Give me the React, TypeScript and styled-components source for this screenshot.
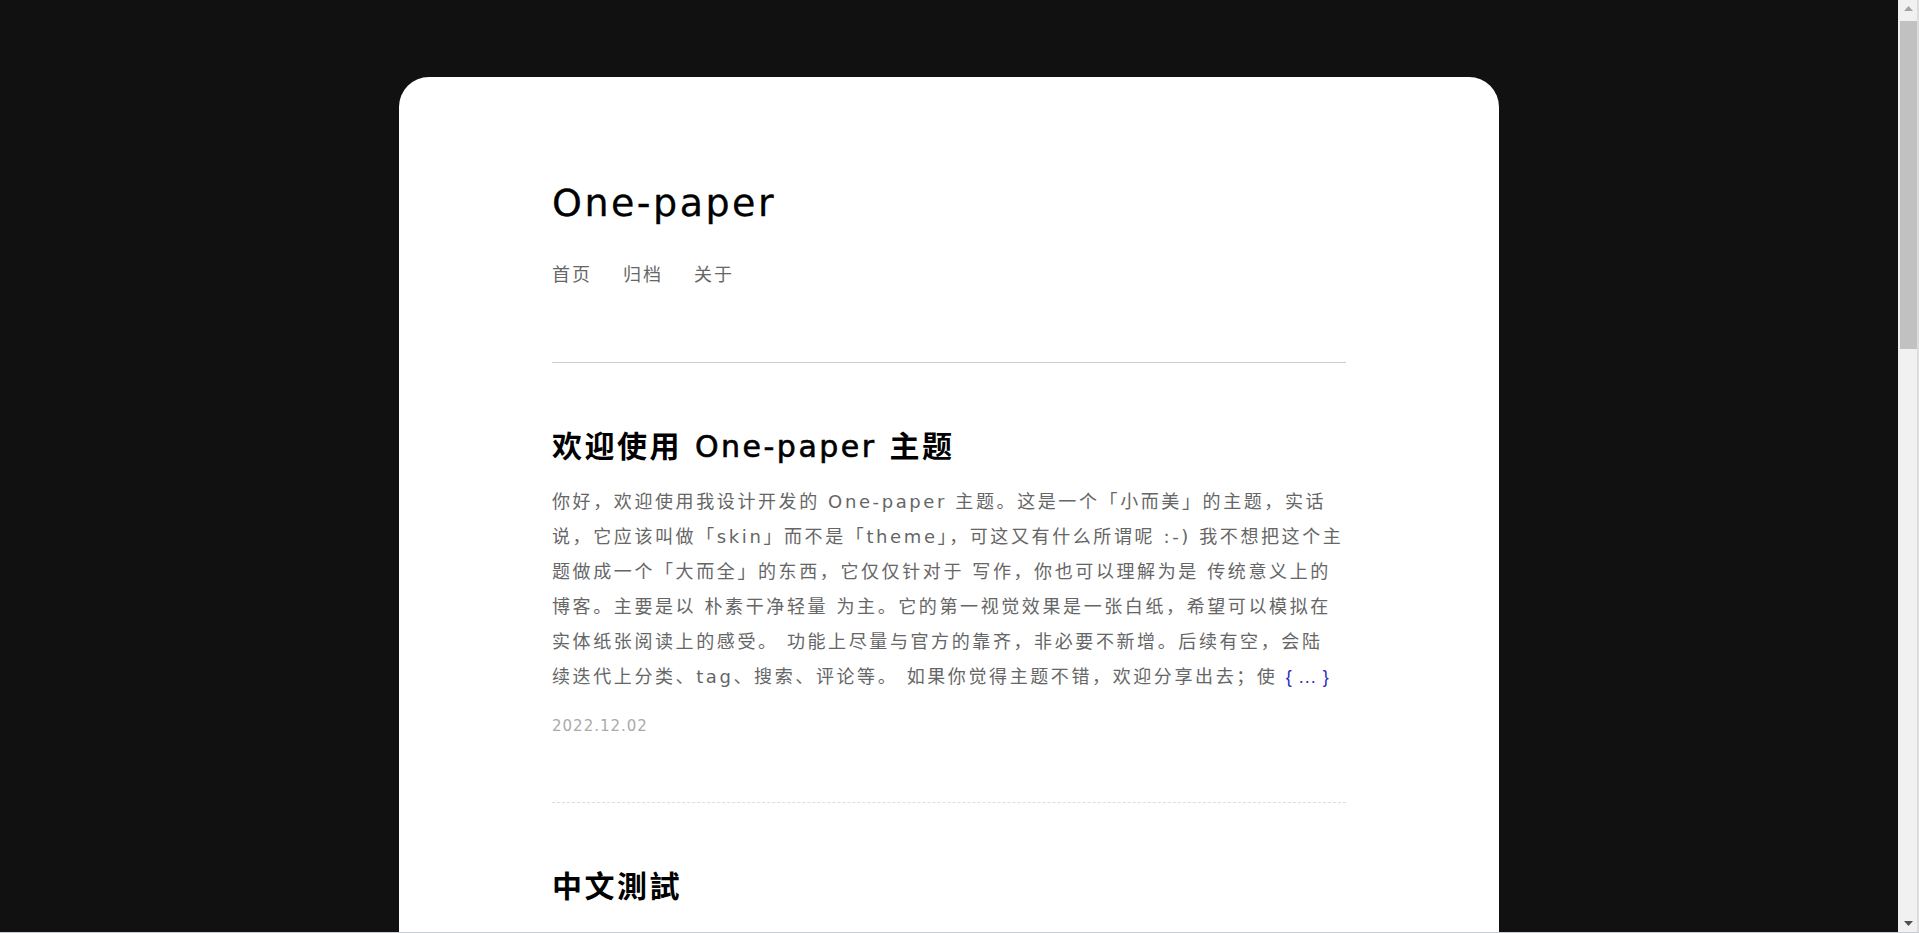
import React from "react";
import styled, { createGlobalStyle } from "styled-components";

const GlobalStyle = createGlobalStyle`
  html, body {
    margin: 0;
    padding: 0;
    background: #111111;
    overflow: hidden;
  }
  body {
    font-family: "DejaVu Sans", "Noto Sans CJK SC", sans-serif;
  }
`;

const Viewport = styled.div`
  display: flex;
  height: 100vh;
  box-sizing: border-box;
  border-bottom: 1px solid #c8ccd6;
`;

const Scroller = styled.div`
  flex: 1;
  min-width: 0;
  overflow-y: auto;
  background: #111111;
  scrollbar-width: none;
  &::-webkit-scrollbar {
    display: none;
  }
`;

const ScrollbarTrack = styled.div`
  width: 21px;
  flex: none;
  display: flex;
  flex-direction: column;
  box-sizing: border-box;
  background: #f1f1f1;
  border-right: 2px solid #dcdcdc;
`;

const ArrowButton = styled.div`
  height: 17px;
  display: flex;
  align-items: center;
  justify-content: center;
  padding-left: 2px;
`;

const ThumbArea = styled.div`
  flex: 1;
  padding: 4px 0 0 2px;
`;

const Thumb = styled.div`
  height: 328px;
  background: #c1c1c1;
`;

const Paper = styled.main`
  width: 1100px;
  box-sizing: border-box;
  margin: 77px auto 77px;
  padding: 103px 153px 90px;
  background: #ffffff;
  border-radius: 30px;
`;

const Header = styled.header`
  display: flex;
  flex-direction: column;
`;

const SiteTitle = styled.h1`
  margin: 0;
  font-size: 38px;
  line-height: 46px;
  font-weight: 500;
  letter-spacing: 2.5px;
  color: #000000;
  -webkit-text-stroke: 0.3px #000000;
`;

const Nav = styled.nav`
  display: flex;
  gap: 31px;
  margin-top: 34px;
`;

const NavLink = styled.a`
  font-size: 18px;
  line-height: 30px;
  letter-spacing: 2px;
  color: #666666;
  text-decoration: none;
`;

const Divider = styled.hr`
  margin: 72px 0 0;
  height: 0;
  border: none;
  border-top: 1px solid #cccccc;
`;

const PostList = styled.section`
  display: flex;
  flex-direction: column;
`;

const Post = styled.article`
  padding: 63px 0 64px;
  border-bottom: 1px dashed #dddddd;
`;

const PostTitle = styled.h2`
  margin: 0;
  font-size: 30px;
  line-height: 42px;
  font-weight: 700;
  letter-spacing: 2.5px;
  color: #000000;
`;

const Latin = styled.span`
  font-weight: 500;
  -webkit-text-stroke: 0.6px #000000;
`;

const Excerpt = styled.p`
  margin: 16px 0 0;
  font-size: 18px;
  line-height: 35.1px;
  letter-spacing: 2.6px;
  color: #666666;
  white-space: nowrap;
`;

const More = styled.a`
  font-family: "Liberation Sans", "Noto Sans CJK SC", sans-serif;
  letter-spacing: 1px;
  color: #2b2bc4;
  text-decoration: none;
`;

const PostDate = styled.time`
  display: block;
  margin-top: 18px;
  font-size: 15px;
  line-height: 24px;
  letter-spacing: 1px;
  color: #aaaaaa;
`;

const Pager = styled.div`
  display: flex;
  justify-content: flex-end;
  margin-top: 48px;
`;

const PagerLink = styled.a`
  font-size: 18px;
  letter-spacing: 2px;
  color: #666666;
  text-decoration: none;
`;

const Footer = styled.footer`
  margin-top: 80px;
  font-size: 14px;
  letter-spacing: 1.5px;
  color: #aaaaaa;
`;

type PostData = {
  title: React.ReactNode;
  lines: string[];
  date: string;
};

const posts: PostData[] = [
  {
    title: (
      <>
        欢迎使用 <Latin>One-paper</Latin> 主题
      </>
    ),
    lines: [
      "你好，欢迎使用我设计开发的 One-paper 主题。这是一个「小而美」的主题，实话",
      "说，它应该叫做「skin」而不是「theme」，可这又有什么所谓呢 :-) 我不想把这个主",
      "题做成一个「大而全」的东西，它仅仅针对于 写作，你也可以理解为是 传统意义上的",
      "博客。主要是以 朴素干净轻量 为主。它的第一视觉效果是一张白纸，希望可以模拟在",
      "实体纸张阅读上的感受。 功能上尽量与官方的靠齐，非必要不新增。后续有空，会陆",
      "续迭代上分类、tag、搜索、评论等。 如果你觉得主题不错，欢迎分享出去；使",
    ],
    date: "2022.12.02",
  },
  {
    title: "中文測試",
    lines: [
      "這是一篇中文測試文章，用來檢查繁體字與簡體字在主題中的顯示效果。排版、",
      "行距、字距都應該保持一致，閱讀起來舒適自然。",
    ],
    date: "2022.12.01",
  },
  {
    title: "Markdown 语法测试",
    lines: [
      "本文用于测试 Markdown 的各种语法在主题中的渲染效果，包括标题、段落、",
      "引用、列表、代码块、表格以及图片等常见元素。",
    ],
    date: "2022.11.28",
  },
  {
    title: "关于写作这件事",
    lines: [
      "写作是一种整理思绪的方式。把零散的想法变成完整的文字，需要耐心，",
      "也需要一点勇气。一张白纸，是最好的开始。",
    ],
    date: "2022.11.02",
  },
];

const UpArrow = () => (
  <svg width="9" height="5" viewBox="0 0 9 5" aria-hidden="true">
    <polygon points="0,5 4.5,0 9,5" fill="#a3a3a3" />
  </svg>
);

const DownArrow = () => (
  <svg width="9" height="5" viewBox="0 0 9 5" aria-hidden="true">
    <polygon points="0,0 9,0 4.5,5" fill="#505050" />
  </svg>
);

export default function App() {
  return (
    <>
      <GlobalStyle />
      <Viewport>
        <Scroller>
          <Paper>
            <Header>
              <SiteTitle>One-paper</SiteTitle>
              <Nav>
                <NavLink href="#">首页</NavLink>
                <NavLink href="#">归档</NavLink>
                <NavLink href="#">关于</NavLink>
              </Nav>
            </Header>
            <Divider />
            <PostList>
              {posts.map((p, i) => (
                <Post key={i}>
                  <PostTitle>{p.title}</PostTitle>
                  <Excerpt>
                    {p.lines.map((line, j) => (
                      <React.Fragment key={j}>
                        {j > 0 && <br />}
                        {line}
                      </React.Fragment>
                    ))}{" "}
                    <More href="#">{"{ ... }"}</More>
                  </Excerpt>
                  <PostDate>{p.date}</PostDate>
                </Post>
              ))}
            </PostList>
            <Pager>
              <PagerLink href="#">下一页 →</PagerLink>
            </Pager>
            <Footer>© 2022 One-paper · Powered by Hexo</Footer>
          </Paper>
        </Scroller>
        <ScrollbarTrack>
          <ArrowButton>
            <UpArrow />
          </ArrowButton>
          <ThumbArea>
            <Thumb />
          </ThumbArea>
          <ArrowButton>
            <DownArrow />
          </ArrowButton>
        </ScrollbarTrack>
      </Viewport>
    </>
  );
}
